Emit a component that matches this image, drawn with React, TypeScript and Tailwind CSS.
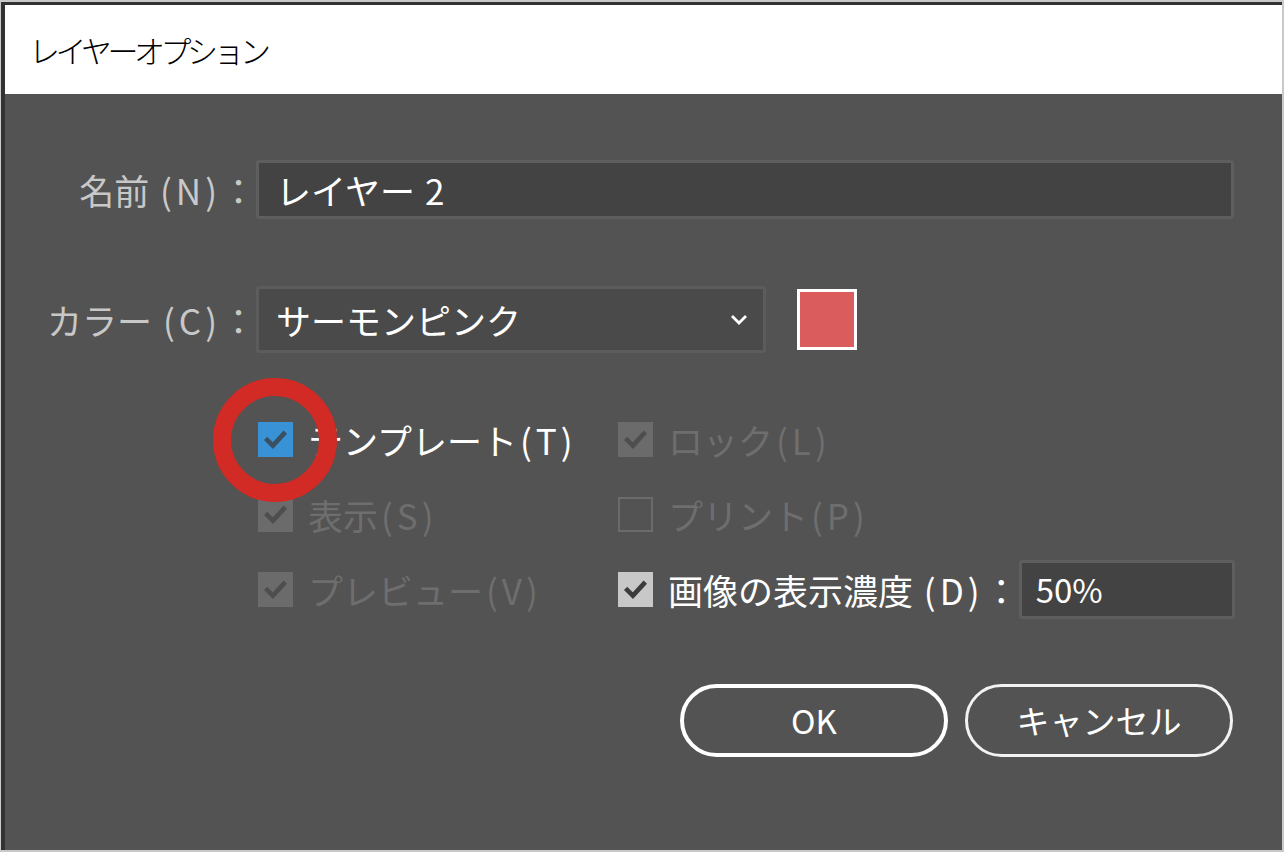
import React from 'react';

const font = { fontFamily: '"Noto Sans CJK JP", "Noto Sans", sans-serif' };

const Check: React.FC<{ color: string }> = ({ color }) => (
    <svg viewBox="0 0 34 34" className="w-full h-full">
        <path d="M9 17.5 L14.5 23 L25 11.5" fill="none" stroke={color} strokeWidth="4.5" strokeLinecap="square" />
    </svg>
);

// latin key hint like (N), a bit looser than the kana around it
const Key: React.FC<{ k: string }> = ({ k }) => (
    <span className="tracking-[4px] ml-[3px]">({k})</span>
);

type BoxProps = { jp: string; k: string; tail?: string; kind: 'blue' | 'disabled' | 'empty' | 'light' };

const CheckRow: React.FC<BoxProps> = ({ jp, k, tail, kind }) => {
    const box =
        kind === 'blue' ? 'bg-[#3a92d6]' :
        kind === 'disabled' ? 'bg-[#6b6b6b]' :
        kind === 'light' ? 'bg-[#c8c8c8]' :
        'border-2 border-[#6b6b6b]';
    const check = kind === 'blue' ? '#3a4f60' : kind === 'disabled' ? '#4e4e4e' : '#3c3c3c';
    const text = kind === 'blue' || kind === 'light' ? 'text-white' : 'text-[#6e6e6e]';
    return (
        <div className="flex items-center h-[59px]">
            <div className={`w-[35px] h-[35px] shrink-0 ${box}`}>
                {kind !== 'empty' && <Check color={check} />}
            </div>
            <span className={`ml-[15px] text-[35px] leading-none whitespace-nowrap ${text}`}>
                {jp}<Key k={k} />{tail}
            </span>
        </div>
    );
};

const App: React.FC = () => {
    return (
        <div className="w-[1284px] h-[852px] bg-[#c9c9c9] pl-px pt-[2px] pr-[2px] pb-[2px]" style={font}>
            <div className="relative h-full flex flex-col border-l-4 border-t-[3px] border-[#323232]">
                {/* title bar */}
                <div className="h-[89px] bg-white flex items-center pl-[24px]">
                    <span className="text-[31px] tracking-[-4.5px] text-black leading-none font-light">レイヤーオプション</span>
                </div>

                {/* body */}
                <div className="flex-1 bg-[#535353] pr-[48px] pt-[66px] flex flex-col">
                    {/* name */}
                    <div className="flex items-center">
                        <div className="w-[251px] shrink-0 text-right text-[35px] text-[#c8c8c8] leading-none whitespace-nowrap">名前 <Key k="N" />：</div>
                        <div className="flex-1 h-[59px] bg-[#434343] border-[3px] border-[#5e5e5e] rounded-[3px] flex items-center pl-[17px]">
                            <span className="text-[35px] text-white leading-none">レイヤー<span className="ml-[10px]">2</span></span>
                        </div>
                    </div>

                    {/* color */}
                    <div className="flex items-center mt-[67px]">
                        <div className="w-[251px] shrink-0 text-right text-[35px] text-[#c8c8c8] leading-none whitespace-nowrap">カラー <Key k="C" />：</div>
                        <div className="w-[510px] h-[67px] bg-[#4a4a4a] border-[3px] border-[#5c5c5c] rounded-[3px] flex items-center justify-between pl-[17px] pr-[15px]">
                            <span className="text-[35px] text-white leading-none">サーモンピンク</span>
                            <svg viewBox="0 0 18 11" className="w-[18px] h-[11px]">
                                <path d="M2 2 L9 9 L16 2" fill="none" stroke="white" strokeWidth="2.8" />
                            </svg>
                        </div>
                        <div className="ml-[31px] w-[60px] h-[61px] border-[3px] border-white bg-[#db5c5c]" />
                    </div>

                    {/* options */}
                    <div className="mt-[57px] pl-[253px] grid grid-cols-[360px_1fr] gap-y-[16px]">
                        <CheckRow jp="テンプレート" k="T" kind="blue" />
                        <CheckRow jp="ロック" k="L" kind="disabled" />
                        <CheckRow jp="表示" k="S" kind="disabled" />
                        <CheckRow jp="プリント" k="P" kind="empty" />
                        <CheckRow jp="プレビュー" k="V" kind="disabled" />
                        <div className="flex items-center">
                            <CheckRow jp="画像の表示濃度 " k="D" tail="：" kind="light" />
                            <div className="ml-auto w-[216px] h-[59px] bg-[#434343] border-[3px] border-[#5e5e5e] rounded-[3px] flex items-center pl-[14px]">
                                <span className="text-[33px] text-white leading-none">50%</span>
                            </div>
                        </div>
                    </div>

                    {/* buttons */}
                    <div className="mt-[65px] flex justify-end gap-[17px] pr-px">
                        <button className="w-[268px] h-[73px] rounded-full border-4 border-white text-[33px] text-white leading-none">OK</button>
                        <button className="w-[268px] h-[73px] rounded-full border-[3px] border-[#f2f2f2] text-[33px] text-white leading-none">キャンセル</button>
                    </div>
                </div>

                {/* annotation ring */}
                <div className="absolute left-[208px] top-[373px] w-[124px] h-[124px] rounded-full border-[18px] border-[#d22a24]" />
            </div>
        </div>
    );
};

export default App;
